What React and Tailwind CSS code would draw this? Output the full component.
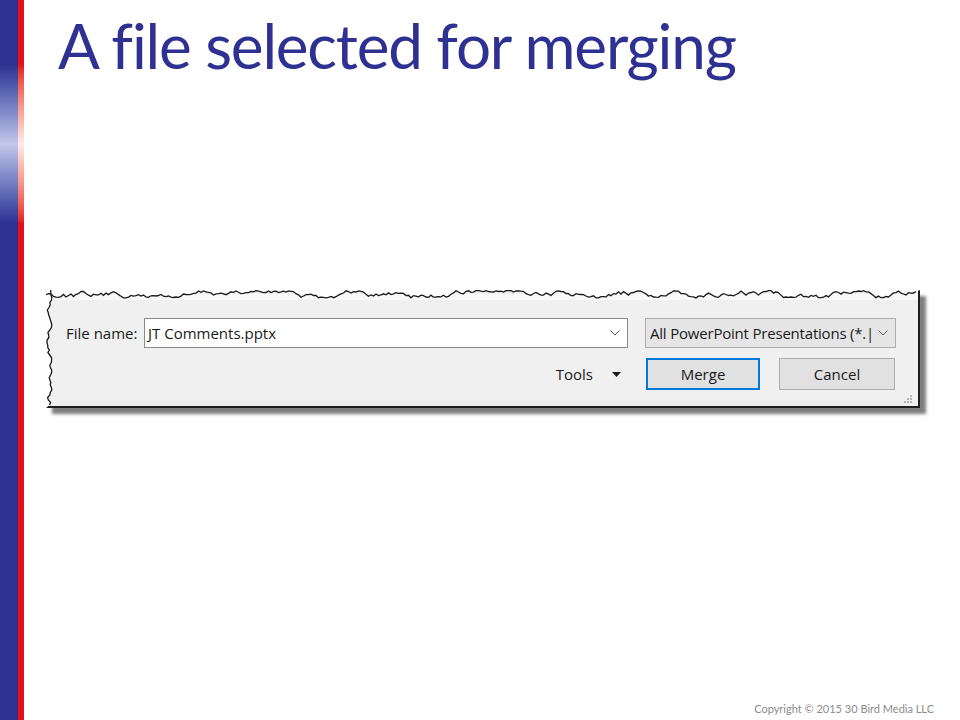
import React from 'react';

// deterministic jagged line for the torn screenshot edges
function rng(seed) {
  let s = seed;
  return () => {
    s = (s * 1103515245 + 12345) % 2147483648;
    return s / 2147483648;
  };
}

function tornPoints(len, step, min, max, seed) {
  const r = rng(seed);
  const pts = [];
  let v = (min + max) / 2;
  for (let i = 0; i <= len; i += step) {
    v += (r() - 0.5) * 5;
    if (v < min) v = min + r() * 1.5;
    if (v > max) v = max - r() * 1.5;
    pts.push([i, Math.round(v * 10) / 10]);
  }
  return pts;
}

const W = 874;
const H = 118;
const top = tornPoints(W - 2, 2.5, 0.5, 8, 7);
const left = tornPoints(H - 2, 2.5, 0.5, 6, 19);

function TornEdges() {
  const topLine = top.map(([x, y]) => `${x},${y}`).join(' ');
  const leftLine = left.map(([y, x]) => `${x},${y}`).join(' ');
  const topFill = `M0,0 ${top.map(([x, y]) => `L${x},${y}`).join(' ')} L${W},0 Z`;
  const leftFill = `M0,0 ${left.map(([y, x]) => `L${x},${y}`).join(' ')} L0,${H} Z`;
  return (
    <svg className="absolute inset-0 pointer-events-none" width={W} height={H} viewBox={`0 0 ${W} ${H}`}>
      <path d={topFill} fill="#ffffff" />
      <path d={leftFill} fill="#ffffff" />
      <polyline points={topLine} fill="none" stroke="#1a1a1a" strokeWidth="1.3" />
      <polyline points={leftLine} fill="none" stroke="#1a1a1a" strokeWidth="1.3" />
    </svg>
  );
}

function Chevron() {
  return (
    <svg width="10" height="6" viewBox="0 0 10 6">
      <polyline points="0.5,0.5 5,5 9.5,0.5" fill="none" stroke="#606060" strokeWidth="1" />
    </svg>
  );
}

function Dialog() {
  return (
    <div
      className="relative ml-[22px] mt-[210px] w-[874px] h-[118px] bg-[#f0f0f0] border-r-2 border-b-2 border-[#1e1e1e] shadow-[6px_6px_3px_rgba(0,0,0,0.5)]"
      style={{ fontFamily: '"Open Sans", "Noto Sans", sans-serif' }}
    >
      <div className="absolute left-0 right-0 top-[4px] h-[6px] bg-[#f8f8f8]" />
      <div className="relative flex items-center pt-[28px] pl-[20px] text-[15px] text-[#1a1a1a]">
        <div className="w-[78px]">File name:</div>
        <div className="w-[484px] h-[30px] bg-white border border-[#8a8a8a] flex items-center justify-between pl-[3px] pr-[7px]">
          <span>JT Comments.pptx</span>
          <Chevron />
        </div>
        <div className="ml-[17px] w-[251px] h-[30px] bg-[#e5e5e5] border border-[#adadad] flex items-center justify-between pl-[4px] pr-[7px]">
          <span className="whitespace-nowrap tracking-[-0.2px]">All PowerPoint Presentations (*.|</span>
          <Chevron />
        </div>
      </div>
      <div className="relative flex items-center justify-end pr-[23px] mt-[10px] text-[15px] text-[#1a1a1a]">
        <span>Tools</span>
        <svg className="ml-[19px]" width="9" height="5" viewBox="0 0 9 5">
          <polygon points="0,0 9,0 4.5,5" fill="#1a1a1a" />
        </svg>
        <button className="ml-[25px] w-[114px] h-[32px] bg-[#e1e1e1] border-2 border-[#0078d7]">Merge</button>
        <button className="ml-[19px] w-[116px] h-[32px] bg-[#e1e1e1] border border-[#adadad]">Cancel</button>
      </div>
      <svg className="absolute right-[5px] bottom-[2px]" width="10" height="10" viewBox="0 0 10 10">
        <rect x="7" y="1" width="2" height="2" fill="#b5b5b5" />
        <rect x="4" y="4" width="2" height="2" fill="#b5b5b5" />
        <rect x="7" y="4" width="2" height="2" fill="#b5b5b5" />
        <rect x="1" y="7" width="2" height="2" fill="#b5b5b5" />
        <rect x="4" y="7" width="2" height="2" fill="#b5b5b5" />
        <rect x="7" y="7" width="2" height="2" fill="#b5b5b5" />
      </svg>
      <TornEdges />
    </div>
  );
}

export default function App() {
  return (
    <div className="w-[960px] h-[720px] flex bg-white overflow-hidden">
      <div className="w-[18px] h-full bg-linear-to-b from-[#2e3192] from-[9%] via-[#c4c7ea] via-[20%] to-[#2e3192] to-[31%]" />
      <div className="w-[6px] h-full bg-linear-to-b from-[#e3101a] from-[9%] via-[#fbeaea] via-[20%] to-[#e3101a] to-[31%]" />
      <div className="flex-1 flex flex-col">
        <h1
          className="pl-[34px] pt-[10px] text-[62px] leading-[70px] text-[#2e3192] tracking-[-1.2px]"
          style={{ fontFamily: 'Lato, "Open Sans", sans-serif' }}
        >
          A file selected for merging
        </h1>
        <Dialog />
        <div
          className="mt-auto self-end pr-[26px] pb-[3px] text-[11px] text-[#8c8c8c]"
          style={{ fontFamily: 'Lato, sans-serif' }}
        >
          Copyright © 2015 30 Bird Media LLC
        </div>
      </div>
    </div>
  );
}
